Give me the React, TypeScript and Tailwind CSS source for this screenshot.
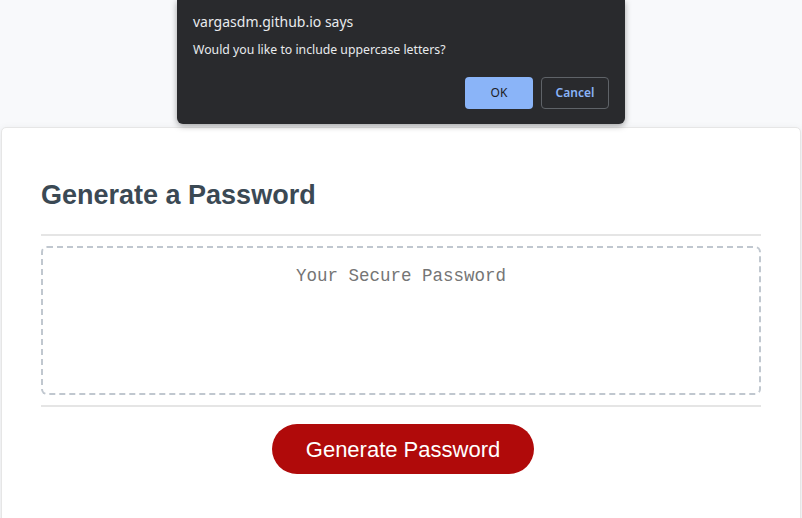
import React from 'react';

const App = () => {
  return (
    <div className="relative min-h-[518px] bg-[#f8f9fb] overflow-hidden font-['Liberation_Sans',Arial,sans-serif]">
      <div className="pt-[127px]">
        <div className="mx-auto w-[800px] rounded-[5px] border border-[#e6e6e6] bg-white px-[39px] pt-[30px] pb-[60px] shadow-[0_2px_8px_rgba(0,0,0,0.08)]">
          <div className="border-b-2 border-[#e5e5e5] pt-[20px] pb-[22px]">
            <h2 className="text-[27px] font-bold leading-[34px] text-[#3b4954]">Generate a Password</h2>
          </div>
          <div className="py-[10px]">
            <div className="h-[149px] rounded-[6px] border-2 border-dashed border-[#c0c7cf] pt-[15px] text-center font-['Liberation_Mono',monospace] text-[17.5px] text-[#757575]">
              Your Secure Password
            </div>
          </div>
          <div className="border-t-2 border-[#e5e5e5] flex justify-center pt-[17px] pl-[4px]">
            <button className="h-[50px] w-[262px] rounded-[25px] bg-[#b00a0a] text-[22px] text-white">
              Generate Password
            </button>
          </div>
        </div>
      </div>

      <div className="absolute left-[177px] top-0 w-[448px] h-[124px] rounded-b-[6px] bg-[#292a2d] shadow-[0_2px_6px_rgba(0,0,0,0.35)] px-[16px] pt-[12px] font-['Noto_Sans',sans-serif]">
        <div className="text-[14px] leading-[20px] text-[#e8eaed]">vargasdm.github.io says</div>
        <div className="mt-[9px] text-[12.25px] leading-[18px] text-[#e8eaed]">Would you like to include uppercase letters?</div>
        <div className="mt-[18px] flex justify-end gap-[8px]">
          <button className="h-[32px] w-[68px] rounded-[4px] bg-[#8ab4f8] text-[12px] text-[#202124]">OK</button>
          <button className="h-[32px] w-[68px] rounded-[4px] border border-[#5f6368] text-[12px] font-semibold text-[#8ab4f8]">Cancel</button>
        </div>
      </div>
    </div>
  );
};

export default App;
